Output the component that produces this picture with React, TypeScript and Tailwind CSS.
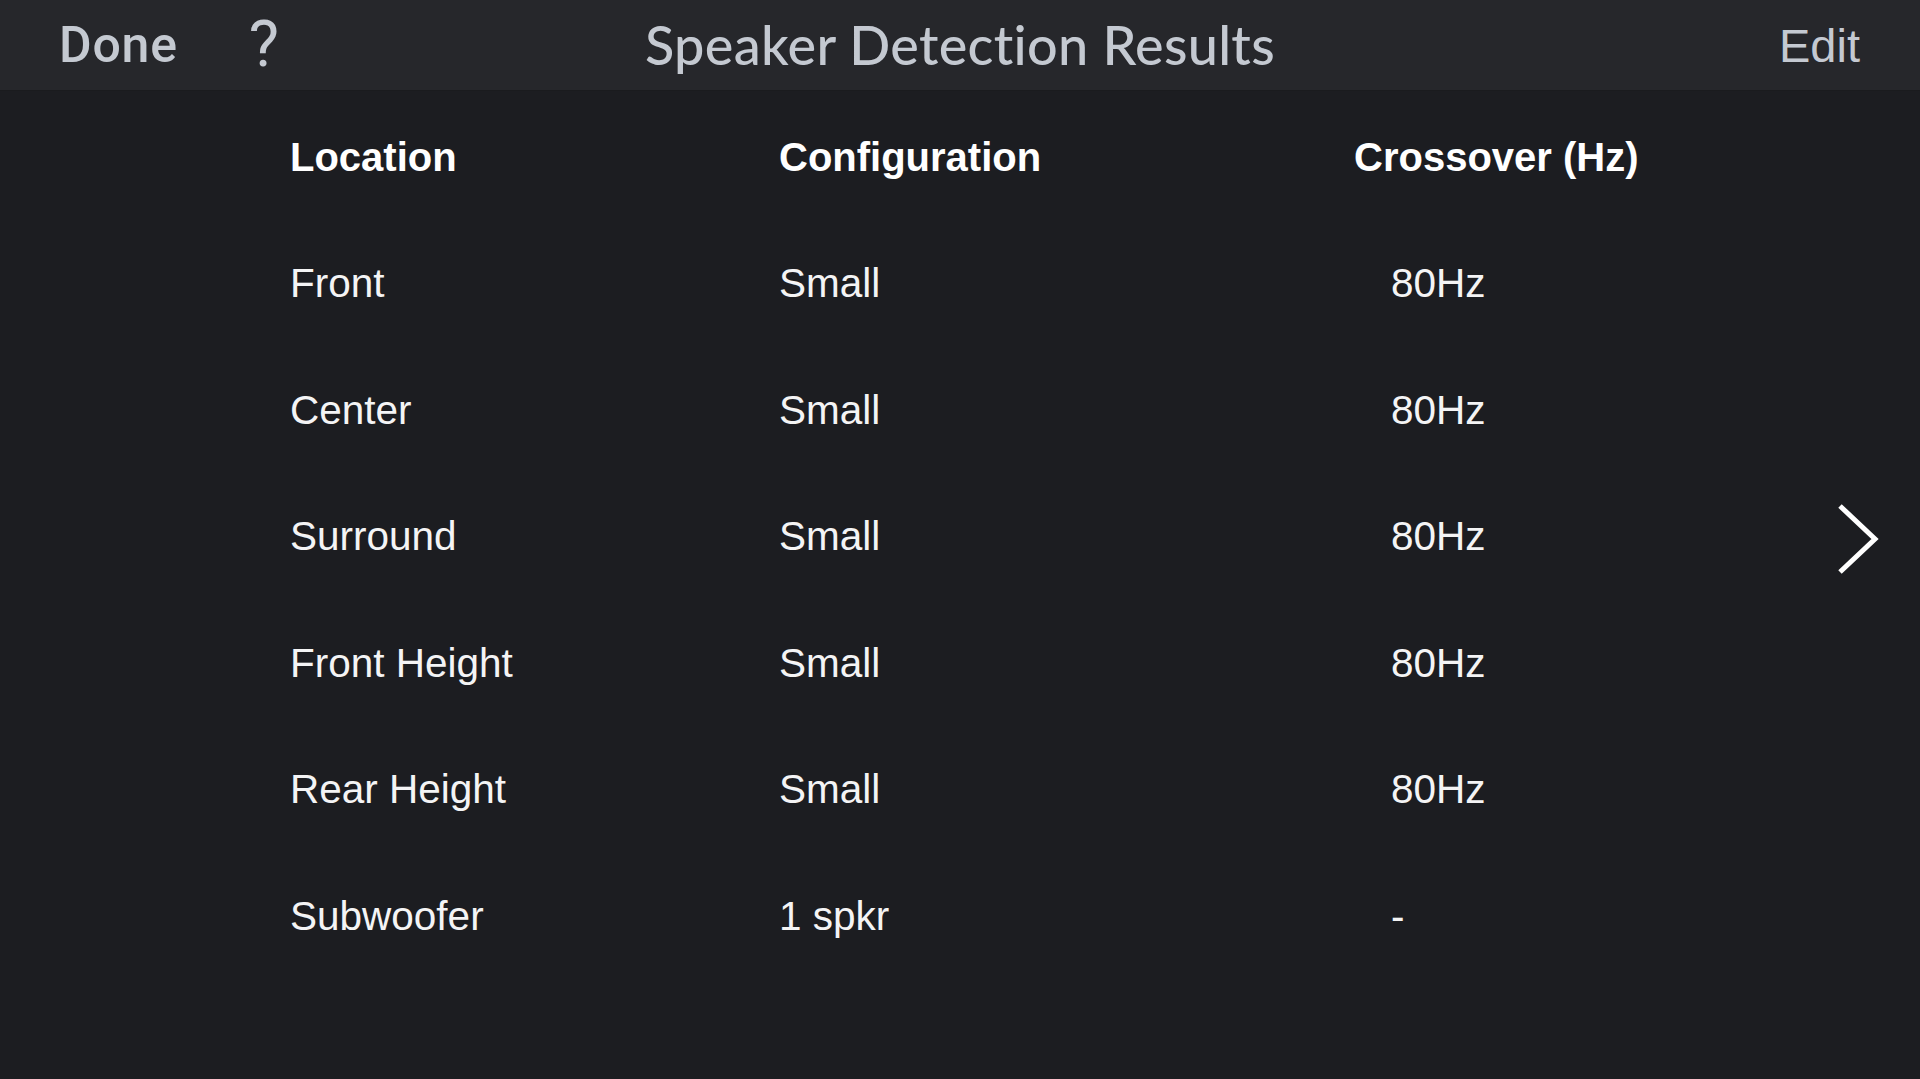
const rows = [
  { loc: "Front", cfg: "Small", hz: "80Hz" },
  { loc: "Center", cfg: "Small", hz: "80Hz" },
  { loc: "Surround", cfg: "Small", hz: "80Hz", arrow: true },
  { loc: "Front Height", cfg: "Small", hz: "80Hz" },
  { loc: "Rear Height", cfg: "Small", hz: "80Hz" },
  { loc: "Subwoofer", cfg: "1 spkr", hz: "-" },
];

const App = () => {
  return (
    <div className="w-[1920px] h-[1079px] bg-[#1c1d21] overflow-hidden font-['Liberation_Sans',Arial,sans-serif]">
      {/* top bar */}
      <div className="h-[91px] bg-[#26272b] border-b border-[#1a1b1e] flex items-center">
        <div className="flex items-center pl-[59px] w-[400px]">
          <span className="text-[50px] font-medium text-[#c4c9d1] font-['Roboto',sans-serif] leading-none tracking-[0.8px]">Done</span>
          <span className="ml-[71px] text-[64px] text-[#c4c9d1] font-['Roboto',sans-serif] leading-none">?</span>
        </div>
        <div className="flex-1 text-center text-[54px] font-medium text-[#c4c9d1] font-['Lato',sans-serif] leading-none tracking-[0.3px]">
          Speaker Detection Results
        </div>
        <div className="w-[400px] flex justify-end pr-[60px]">
          <span className="text-[47px] text-[#c4c9d1] leading-none">Edit</span>
        </div>
      </div>

      {/* table */}
      <div className="pt-[3px]">
        <div className="grid grid-cols-[290px_489px_575px_1fr] h-[126.5px] items-center text-white text-[40px] font-bold">
          <div />
          <div>Location</div>
          <div>Configuration</div>
          <div>Crossover (Hz)</div>
        </div>
        {rows.map((r) => (
          <div
            key={r.loc}
            className="grid grid-cols-[290px_489px_575px_1fr] h-[126.5px] items-center text-[#f4f4f5] text-[40.5px]"
          >
            <div />
            <div>{r.loc}</div>
            <div>{r.cfg}</div>
            <div className="flex items-center justify-between">
              <span className="pl-[37px]">{r.hz}</span>
              {r.arrow && (
                <svg width="44" height="72" viewBox="0 0 44 72" className="mr-[40px] mt-[4px]">
                  <polyline points="4,3 39,36 4,69" fill="none" stroke="#ffffff" strokeWidth="5" />
                </svg>
              )}
            </div>
          </div>
        ))}
      </div>
    </div>
  );
};

export default App;
